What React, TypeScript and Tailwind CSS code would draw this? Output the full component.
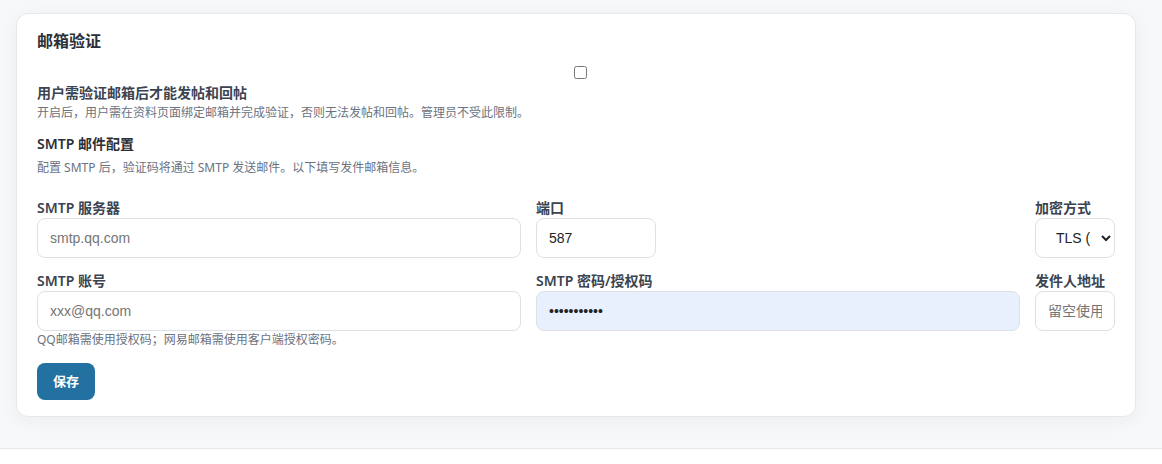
import React from "react";

const label =
  "block text-[14px] leading-[21px] font-semibold text-[#3b4450] whitespace-nowrap";
const input =
  "block h-[40px] rounded-[8px] border border-[#dde1e6] bg-white px-[12px] text-[14px] text-[#222] font-['Liberation_Sans','Noto_Sans_CJK_SC',sans-serif] placeholder:text-[#757575] outline-none";

export default function App() {
  return (
    <div className="min-h-[464px] bg-white font-['Noto_Sans','Noto_Sans_CJK_SC',sans-serif]">
      <div className="bg-[#f7f8fa] pt-[13px] pb-[31px] pl-[16px] border-b border-[#e6e8eb]">
        <div className="w-[1120px] rounded-[12px] border border-[#e6e8eb] bg-white px-[20px] pt-[17px] pb-[16px] shadow-[0_4px_18px_rgba(20,30,50,0.05)]">
          <h2 className="text-[16px] leading-[20px] font-semibold text-[#2b2f36]">邮箱验证</h2>

          <div className="mt-[15px] flex h-[13px] justify-center pl-[8px]">
            <input type="checkbox" className="m-0 h-[13px] w-[13px]" />
          </div>
          <div className="mt-[5px] text-[14px] leading-[18px] font-semibold text-[#3b4450]">
            用户需验证邮箱后才能发帖和回帖
          </div>
          <div className="mt-[2px] text-[12px] leading-[18px] text-[#6b7280]">
            开启后，用户需在资料页面绑定邮箱并完成验证，否则无法发帖和回帖。管理员不受此限制。
          </div>

          <div className="mt-[12px] text-[14px] leading-[20px] font-semibold text-[#2b2f36]">
            SMTP 邮件配置
          </div>
          <div className="mt-[5px] text-[12px] leading-[18px] text-[#6b7280]">
            配置 SMTP 后，验证码将通过 SMTP 发送邮件。以下填写发件邮箱信息。
          </div>

          <div className="mt-[20px] grid grid-cols-[484px_484px_80px] gap-x-[15px] gap-y-[12px]">
            <div>
              <label className={label}>SMTP 服务器</label>
              <input className={`${input} w-full`} placeholder="smtp.qq.com" />
            </div>
            <div>
              <label className={label}>端口</label>
              <input className={`${input} w-[120px]`} defaultValue="587" />
            </div>
            <div>
              <label className={label}>加密方式</label>
              <select
                className={`${input} w-full pl-[16px] pr-[8px]`}
                defaultValue="tls"
              >
                <option value="tls">TLS (STARTTLS)</option>
                <option value="ssl">SSL</option>
                <option value="none">无</option>
              </select>
            </div>

            <div>
              <label className={label}>SMTP 账号</label>
              <input className={`${input} w-full`} placeholder="xxx@qq.com" />
            </div>
            <div>
              <label className={label}>SMTP 密码/授权码</label>
              <input
                type="password"
                readOnly
                className={`${input} w-full !bg-[#e8f0fe] border-[#d6dfea]`}
                defaultValue="abcdefghijk"
              />
            </div>
            <div>
              <label className={label}>发件人地址</label>
              <input className={`${input} w-full`} placeholder="留空使用账号" />
            </div>
          </div>

          <div className="text-[12px] leading-[18px] text-[#6b7280]">
            QQ邮箱需使用授权码；网易邮箱需使用客户端授权密码。
          </div>

          <button className="mt-[14px] h-[37px] w-[58px] rounded-[8px] bg-[#2271a0] text-[13px] font-bold text-white">
            保存
          </button>
        </div>
      </div>
    </div>
  );
}
